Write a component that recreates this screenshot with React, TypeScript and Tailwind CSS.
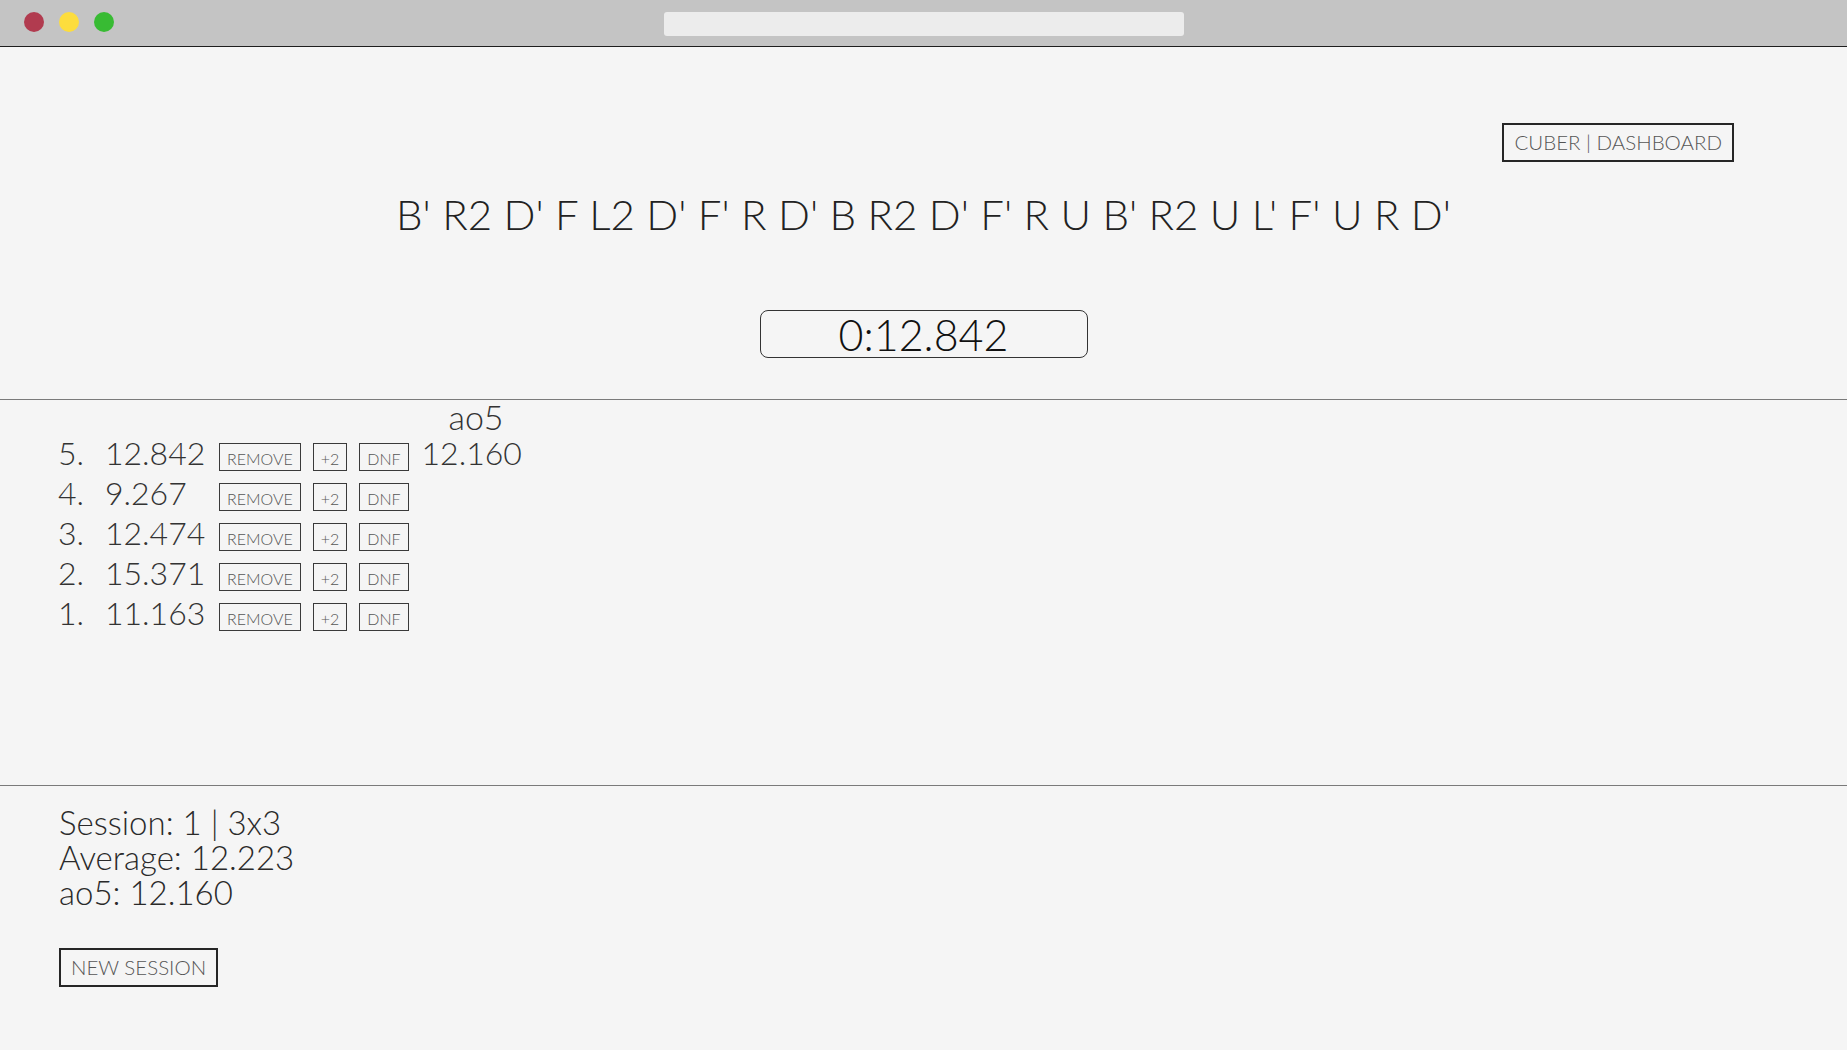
import { useState } from 'react'

type Solve = { id: number; time: string; ao5?: string }

const scramble = "B' R2 D' F L2 D' F' R D' B R2 D' F' R U B' R2 U L' F' U R D'"

const initialSolves: Solve[] = [
  { id: 5, time: '12.842', ao5: '12.160' },
  { id: 4, time: '9.267' },
  { id: 3, time: '12.474' },
  { id: 2, time: '15.371' },
  { id: 1, time: '11.163' },
]

function SmallButton({ label, onClick }: { label: string; onClick?: () => void }) {
  return (
    <button
      onClick={onClick}
      className="border-[1.5px] border-[#3a3a3a] px-[7px] pt-[4px] pb-[1px] text-[16px] leading-[21px] text-[#555] bg-transparent"
    >
      {label}
    </button>
  )
}

export default function App() {
  const [solves, setSolves] = useState<Solve[]>(initialSolves)

  const removeSolve = (id: number) => setSolves(solves.filter(s => s.id !== id))

  return (
    <div className="min-h-screen bg-[#f5f5f5] font-['Lato','Noto_Sans',sans-serif] font-light text-[#2a2a2a]">
      {/* Window chrome */}
      <div className="h-[47px] bg-[#c4c4c4] border-b border-[#1e1e1e] grid grid-cols-[1fr_520px_1fr] items-start">
        <div className="flex gap-[15px] pl-[24px] pt-[12px]">
          <span className="w-[20px] h-[20px] rounded-full bg-[#b13b4f]" />
          <span className="w-[20px] h-[20px] rounded-full bg-[#fddd3d]" />
          <span className="w-[20px] h-[20px] rounded-full bg-[#38bb33]" />
        </div>
        <div className="mt-[12px] h-[24px] rounded-[3px] bg-[#ececec]" />
        <div />
      </div>

      {/* Scramble + timer */}
      <div className="h-[353px] border-b border-[#7a7a7a] flex flex-col">
        <div className="flex justify-end pr-[113px] pt-[76px]">
          <button className="h-[39px] border-2 border-[#262626] px-[10px] text-[20.5px] leading-none text-[#555]">
            CUBER | DASHBOARD
          </button>
        </div>
        <div className="mt-[28px] text-center text-[42px] leading-[48px] text-[#222]">{scramble}</div>
        <div className="mt-[72px] flex justify-center">
          <div className="w-[328px] h-[48px] rounded-[8px] border-[1.5px] border-[#333] flex items-center justify-center text-[43px] leading-none text-[#111]">
            0:12.842
          </div>
        </div>
      </div>

      {/* Solves table */}
      <div className="h-[386px] border-b border-[#7a7a7a] pl-[58px]">
        <div className="flex">
          <div className="w-[363px]" />
          <div className="w-[110px] text-center text-[34px] leading-[33px] text-[#333]">ao5</div>
        </div>
        {solves.map(s => (
          <div key={s.id} className="flex items-baseline h-[40px] text-[32px] leading-[40px] text-[#333]">
            <span className="w-[47px]">{s.id}.</span>
            <span className="w-[114px]">{s.time}</span>
            <div className="flex items-baseline gap-[12px]">
              <SmallButton label="REMOVE" onClick={() => removeSolve(s.id)} />
              <SmallButton label="+2" />
              <SmallButton label="DNF" />
            </div>
            {s.ao5 && <span className="ml-[13px]">{s.ao5}</span>}
          </div>
        ))}
      </div>

      {/* Session summary */}
      <div className="pl-[59px] pt-[19px] pb-[40px]">
        <div className="text-[33px] leading-[35px] text-[#2a2a2a]">
          <p>Session: 1 | 3x3</p>
          <p>Average: 12.223</p>
          <p>ao5: 12.160</p>
        </div>
        <button className="mt-[38px] h-[39px] border-2 border-[#262626] px-[10px] text-[20.5px] leading-none text-[#555]">
          NEW SESSION
        </button>
      </div>
    </div>
  )
}
